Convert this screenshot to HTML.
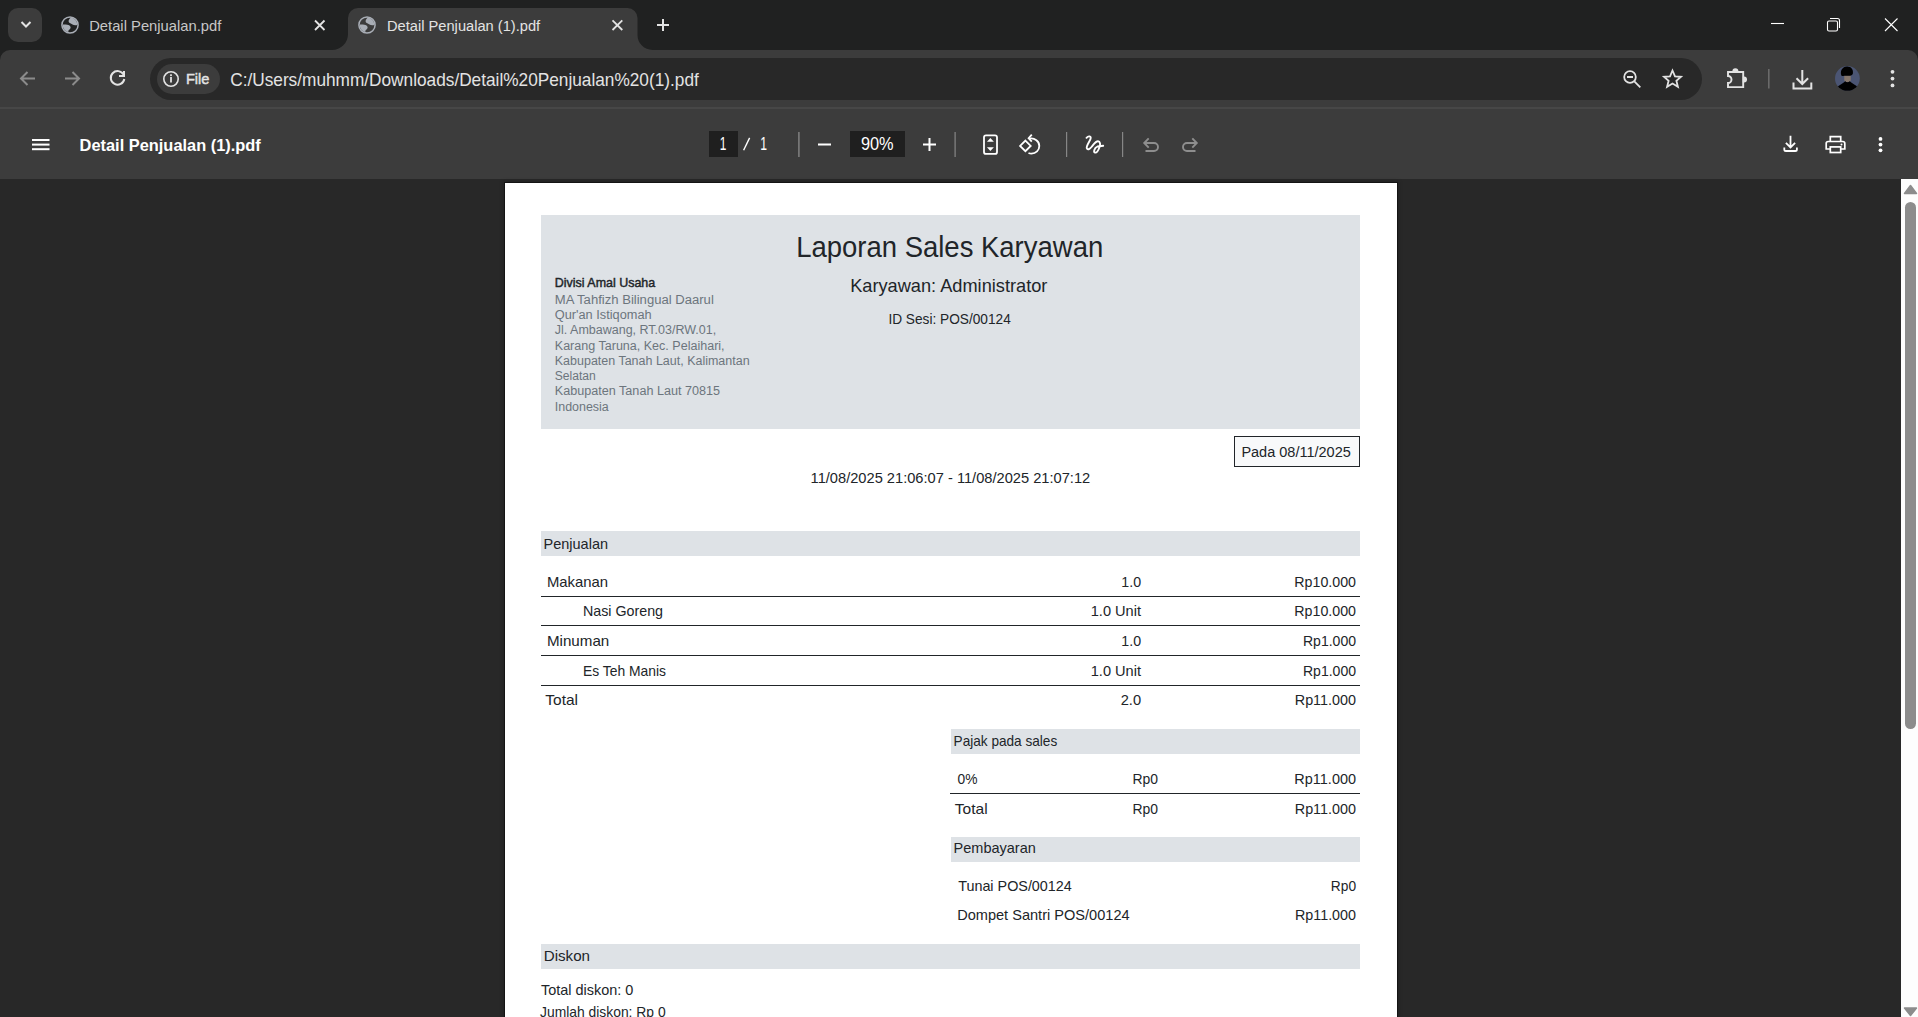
<!DOCTYPE html>
<html><head><meta charset="utf-8">
<style>
html,body{margin:0;padding:0;width:1918px;height:1017px;overflow:hidden;background:#282828;}
body{position:relative;font-family:"Liberation Sans",sans-serif;}
.a{position:absolute;}
svg text{font-family:"Liberation Sans",sans-serif;white-space:pre;}
</style></head><body>
<!-- tab strip -->
<div class="a" style="left:0;top:0;width:1918px;height:50px;background:#202121"></div>
<div class="a" style="left:8px;top:8px;width:34px;height:34px;border-radius:10px;background:#3c3c3c"></div>
<!-- toolbar -->
<div class="a" style="left:0;top:50px;width:1918px;height:58px;background:#3c3c3c"></div>
<div class="a" style="left:0;top:107px;width:1918px;height:2px;background:#474747"></div>
<!-- omnibox -->
<div class="a" style="left:150px;top:58px;width:1552px;height:42px;border-radius:21px;background:#282828"></div>
<div class="a" style="left:157px;top:64px;width:63px;height:30px;border-radius:15px;background:#3c3c3c"></div>
<!-- pdf toolbar -->
<div class="a" style="left:0;top:109px;width:1918px;height:70px;background:#3c3c3c"></div>
<div class="a" style="left:709px;top:131px;width:29px;height:26px;background:#1f1f1f"></div>
<div class="a" style="left:850px;top:131px;width:55px;height:26px;background:#1f1f1f"></div>
<!-- viewer -->
<div class="a" style="left:0;top:179px;width:1901px;height:838px;background:#282828"></div>
<div class="a" style="left:505px;top:183px;width:892px;height:840px;background:#fff;box-shadow:0 0 0 1px #141414,0 0 4px 2px rgba(0,0,0,0.18)"></div>
<div class="a" style="left:541px;top:215px;width:819px;height:214px;background:#dee2e6"></div>
<div class="a" style="left:1234px;top:436px;width:124px;height:29px;border:1px solid #212529;background:#f8f9fa"></div>
<div class="a" style="left:541px;top:531px;width:819px;height:25px;background:#dee2e6"></div>
<div class="a" style="left:541px;top:596px;width:819px;height:1px;background:#212529"></div>
<div class="a" style="left:541px;top:625px;width:819px;height:1px;background:#212529"></div>
<div class="a" style="left:541px;top:655px;width:819px;height:1px;background:#212529"></div>
<div class="a" style="left:541px;top:685px;width:819px;height:1px;background:#212529"></div>
<div class="a" style="left:951px;top:729px;width:409px;height:25px;background:#dee2e6"></div>
<div class="a" style="left:950px;top:793px;width:410px;height:1px;background:#212529"></div>
<div class="a" style="left:951px;top:837px;width:409px;height:25px;background:#dee2e6"></div>
<div class="a" style="left:541px;top:944px;width:819px;height:25px;background:#dee2e6"></div>
<!-- scrollbar -->
<div class="a" style="left:1901px;top:179px;width:17px;height:838px;background:#fdfdfd"></div>
<div class="a" style="left:1905px;top:202px;width:11px;height:527px;border-radius:6px;background:#8c8c8c"></div>

<svg class="a" style="left:0;top:0" width="1918" height="1017" viewBox="0 0 1918 1017">
<!-- active tab -->
<path d="M332,50 A16,16 0 0 0 348,34 L348,18 A10,10 0 0 1 358,8 L627.5,8 A10,10 0 0 1 637.5,18 L637.5,35 A15,15 0 0 0 652.5,50 Z" fill="#3c3c3c"/>
<!-- toolbar rounded corners -->
<path d="M0,50 L10,50 A10,10 0 0 0 0,60 Z" fill="#202121"/>
<path d="M1918,50 L1908,50 A10,10 0 0 1 1918,60 Z" fill="#202121"/>
<g stroke="#e3e3e3" stroke-width="2" fill="none" stroke-linecap="butt">
  <!-- tab search chevron -->
  <path d="M21.5,22 L26,26.5 L30.5,22" stroke-width="2"/>
  <!-- tab close x -->
  <path d="M315,20.5 L324.5,30 M324.5,20.5 L315,30" stroke="#e3e3e3" stroke-width="1.8"/>
  <path d="M612.5,20.3 L622.3,30 M622.3,20.3 L612.5,30" stroke="#e3e3e3" stroke-width="1.8"/>
  <!-- new tab plus -->
  <path d="M663,19 L663,31 M657,25 L669,25" stroke-width="2"/>
  <!-- window controls -->
  <path d="M1771,23.5 L1784,23.5" stroke="#ffffff" stroke-width="1.1"/>
  <rect x="1827.5" y="21" width="10" height="10" rx="1.5" stroke="#ffffff" stroke-width="1.1"/>
  <path d="M1830,18.5 L1837.5,18.5 A2,2 0 0 1 1839.5,20.5 L1839.5,28" stroke="#ffffff" stroke-width="1.1"/>
  <path d="M1885,18.5 L1897.5,31 M1897.5,18.5 L1885,31" stroke="#ffffff" stroke-width="1.1"/>
</g>
<!-- globes -->
<circle cx="70" cy="25" r="8.1" fill="none" stroke="#a9aeb6" stroke-width="1.5"/><path d="M70.8,17.6 C69.0,19.0 68.0,21.0 69.0,22.5 C70.0,23.5 71.5,23.5 72.5,24.5 C73.5,25.3 75.5,25.5 77.4,25.0 A7.4,7.4 0 0 0 70.8,17.6 Z M62.6,24.6 C65.0,24.5 68.0,24.5 69.5,25.5 C71.0,26.5 71.0,28.5 69.5,29.5 C68.5,30.2 68.0,31.0 68.5,32.2 A7.4,7.4 0 0 1 62.6,24.6 Z" fill="#a9aeb6"/>
<circle cx="367" cy="25" r="8.1" fill="none" stroke="#a9aeb6" stroke-width="1.5"/><path d="M367.8,17.6 C366.0,19.0 365.0,21.0 366.0,22.5 C367.0,23.5 368.5,23.5 369.5,24.5 C370.5,25.3 372.5,25.5 374.4,25.0 A7.4,7.4 0 0 0 367.8,17.6 Z M359.6,24.6 C362.0,24.5 365.0,24.5 366.5,25.5 C368.0,26.5 368.0,28.5 366.5,29.5 C365.5,30.2 365.0,31.0 365.5,32.2 A7.4,7.4 0 0 1 359.6,24.6 Z" fill="#a9aeb6"/>
<!-- nav buttons -->
<g fill="none" stroke-width="2">
  <path d="M35,78.5 L21.5,78.5 M27.5,72 L21,78.5 L27.5,85" stroke="#8b8b8b"/>
  <path d="M65,78.5 L78.5,78.5 M72.5,72 L79,78.5 L72.5,85" stroke="#8b8b8b"/>
  <path d="M123.5,74.5 A6.8,6.8 0 1 0 124.3,79" stroke="#e3e3e3"/>
  <path d="M124,71 L124,76 L119,76" stroke="#e3e3e3"/>
</g>
<!-- info icon -->
<circle cx="171" cy="79" r="7.2" fill="none" stroke="#e3e3e3" stroke-width="1.6"/>
<rect x="170.1" y="77" width="1.8" height="5.5" fill="#e3e3e3"/>
<rect x="170.1" y="74.3" width="1.8" height="1.8" fill="#e3e3e3"/>
<!-- omnibox right icons -->
<g fill="none" stroke="#e3e3e3" stroke-width="1.8">
  <circle cx="1630" cy="77" r="5.8"/>
  <path d="M1627,77 L1633,77" stroke-width="2"/>
  <path d="M1634.3,81.3 L1640.3,87.3"/>
  <path d="M1672.5,70.5 L1675,76.3 L1681,76.8 L1676.4,80.8 L1677.9,86.8 L1672.5,83.5 L1667.1,86.8 L1668.6,80.8 L1664,76.8 L1670,76.3 Z" stroke-linejoin="miter"/>
</g>
<!-- extensions -->
<path d="M1728,72 L1743.2,72 L1743.2,87.1 L1728,87.1 L1728,83 A3.5,3.5 0 0 0 1728,76 Z" fill="none" stroke="#e3e3e3" stroke-width="1.9"/>
<path d="M1732.4,72.5 L1732.4,71.3 A3,3 0 0 1 1738.4,71.3 L1738.4,72.5 Z" fill="#e3e3e3"/>
<path d="M1742.8,76.5 L1744,76.5 A3,3 0 0 1 1744,82.5 L1742.8,82.5 Z" fill="#e3e3e3"/>
<rect x="1768" y="69" width="1.6" height="19.5" fill="#6a6a6a"/>
<!-- download -->
<g fill="none" stroke="#e3e3e3" stroke-width="2">
  <path d="M1802.3,70 L1802.3,84 M1796.5,78.3 L1802.3,84 L1808.1,78.3"/>
  <path d="M1793.5,82.5 L1793.5,88.6 L1811.3,88.6 L1811.3,82.5"/>
</g>
<!-- avatar -->
<circle cx="1847.4" cy="78.4" r="12.4" fill="#4b5573"/>
<clipPath id="av"><circle cx="1847.4" cy="78.4" r="12.4"/></clipPath>
<g clip-path="url(#av)">
  <path d="M1844.3,80.5 C1845.5,82.5 1849.5,82.5 1850.7,80.5 L1850.8,75.5 L1844.2,75.5 Z" fill="#85766b"/>
  <path d="M1841.3,75.5 C1840,71 1842,67 1846.5,66.5 C1851,66 1853.8,69.5 1852.8,74 C1852,75.5 1850,76 1847,75.8 C1844.5,75.7 1842.5,76.5 1841.3,75.5Z" fill="#000"/>
  <path d="M1834,94 L1836.5,87.5 C1839.5,85 1843,83.5 1845.3,81.3 C1846.5,82.5 1848.5,82.5 1849.7,81.3 C1852,83.5 1855.5,85 1858.5,87.5 L1861,94 Z" fill="#000"/>
</g>
<!-- menu dots -->
<g fill="#e3e3e3"><circle cx="1892.5" cy="71.8" r="1.9"/><circle cx="1892.5" cy="78.6" r="1.9"/><circle cx="1892.5" cy="85.4" r="1.9"/></g>
<!-- PDF toolbar -->
<path d="M743.6,150.3 L749.6,137.9" stroke="#ffffff" stroke-width="1.4" fill="none"/>
<g fill="#ffffff">
  <rect x="32" y="139" width="17.5" height="2"/>
  <rect x="32" y="143.6" width="17.5" height="2"/>
  <rect x="32" y="148.2" width="17.5" height="2"/>
  <rect x="818" y="143.5" width="13" height="2"/>
  <rect x="923" y="143.5" width="13" height="2"/>
  <rect x="928.5" y="138" width="2" height="13"/>
</g>
<g fill="#868686">
  <rect x="798.2" y="132" width="1.4" height="25"/>
  <rect x="954.5" y="132" width="1.2" height="25"/>
  <rect x="1066" y="132" width="1.2" height="25"/>
  <rect x="1122" y="132" width="1.2" height="25"/>
</g>
<g fill="none" stroke="#ffffff" stroke-width="2">
  <rect x="984" y="135.3" width="13" height="18.6" rx="2" stroke-width="1.8"/>
  <path d="M1025.4,140.6 L1030.7,145.9 L1025.4,151.2 L1020.1,145.9 Z" stroke-width="1.8"/>
  <path d="M1029.6,138.6 C1034.8,137.8 1039.3,141.3 1039.3,146 C1039.3,150.3 1035.8,153.6 1031.5,153.6 C1030.4,153.6 1029.4,153.4 1028.5,153" stroke-width="1.8"/>
  <path d="M1031.8,134.6 L1028.6,138.2 L1031.8,141.6" stroke-width="1.8"/>
  <path d="M1086.5,137.8 C1088.5,135.5 1091.5,136 1090.5,139 C1089.5,142 1086,146 1086.8,148.3 C1087.5,150.3 1089.5,149.3 1091.5,147 C1093.5,144.7 1095.5,141.3 1098,141.3 C1100.2,141.3 1100.6,144.5 1099.6,147 C1098.5,150 1096.5,153 1095,152.6 C1093.4,152.1 1094,148 1097.5,146.5 L1103.2,145.8" stroke-width="1.9" stroke-linecap="round"/>
</g>
<g fill="#ffffff">
  <path d="M986.9,141.7 L990.4,137.9 L993.9,141.7 Z"/>
  <path d="M986.9,147.2 L990.4,151 L993.9,147.2 Z"/>
</g>
<g fill="none" stroke="#8e8e8e" stroke-width="1.9">
  <path d="M1145,143 L1154,143 A4,4 0 0 1 1154,151 L1145.5,151"/>
  <path d="M1148.7,138.3 L1144.2,143 L1148.7,147.7"/>
  <path d="M1196,143 L1187,143 A4,4 0 0 0 1187,151 L1195.5,151"/>
  <path d="M1192.3,138.3 L1196.8,143 L1192.3,147.7"/>
</g>
<g fill="none" stroke="#ffffff" stroke-width="2">
  <path d="M1790.5,135.8 L1790.5,147.5 M1785.9,142.9 L1790.5,147.5 L1795.1,142.9" stroke-width="1.8"/>
  <path d="M1784.3,147.6 L1784.3,149.4 A1.6,1.6 0 0 0 1785.9,151 L1795.3,151 A1.6,1.6 0 0 0 1796.9,149.4 L1796.9,147.6" stroke-width="1.8"/>
  <path d="M1830.3,141 L1830.3,136.6 L1840.7,136.6 L1840.7,141" stroke-width="1.7"/>
  <path d="M1830.3,149 L1826.2,149 L1826.2,143.5 A2,2 0 0 1 1828.2,141.5 L1842.8,141.5 A2,2 0 0 1 1844.8,143.5 L1844.8,149 L1840.7,149" stroke-width="1.7"/>
  <rect x="1830.3" y="146.9" width="10.4" height="5.6" stroke-width="1.7"/>
</g>
<circle cx="1841.5" cy="144.4" r="1" fill="#ffffff"/>
<g fill="#ffffff"><circle cx="1880.5" cy="138.9" r="1.9"/><circle cx="1880.5" cy="144.6" r="1.9"/><circle cx="1880.5" cy="150.3" r="1.9"/></g>
<!-- scrollbar arrows -->
<path d="M1910.5,185.5 L1916.5,193.5 L1904.5,193.5 Z" fill="#8c8c8c" stroke="#8c8c8c" stroke-width="1.5" stroke-linejoin="round"/>
<path d="M1910.5,1015.5 L1916.5,1008 L1904.5,1008 Z" fill="#8c8c8c" stroke="#8c8c8c" stroke-width="1.5" stroke-linejoin="round"/>

<text x="89.18" y="30.7" font-size="15.41" textLength="132.22" lengthAdjust="spacingAndGlyphs" fill="#c7c7c7" font-weight="normal">Detail Penjualan.pdf</text>
<text x="386.99" y="30.5" font-size="15.26" textLength="153.21" lengthAdjust="spacingAndGlyphs" fill="#e3e3e3" font-weight="normal">Detail Penjualan (1).pdf</text>
<text x="185.95" y="83.9" font-size="15.41" textLength="23.50" lengthAdjust="spacingAndGlyphs" fill="#e3e3e3" stroke="#e3e3e3" stroke-width="0.45">File</text>
<text x="230.20" y="85.8" font-size="18.60" textLength="468.61" lengthAdjust="spacingAndGlyphs" fill="#e3e3e3" font-weight="normal">C:/Users/muhmm/Downloads/Detail%20Penjualan%20(1).pdf</text>
<text x="79.59" y="150.8" font-size="16.86" textLength="181.21" lengthAdjust="spacingAndGlyphs" fill="#ffffff" font-weight="bold">Detail Penjualan (1).pdf</text>
<text x="719.84" y="150.1" font-size="17.44" textLength="6.65" lengthAdjust="spacingAndGlyphs" fill="#ffffff" font-weight="normal">1</text>
<text x="760.29" y="150.1" font-size="17.44" textLength="6.78" lengthAdjust="spacingAndGlyphs" fill="#ffffff" font-weight="normal">1</text>
<text x="860.97" y="150.1" font-size="17.44" textLength="32.64" lengthAdjust="spacingAndGlyphs" fill="#ffffff" font-weight="normal">90%</text>
<text x="796.16" y="257.2" font-size="30.23" textLength="307.06" lengthAdjust="spacingAndGlyphs" fill="#212529" font-weight="normal">Laporan Sales Karyawan</text>
<text x="850.19" y="291.9" font-size="18.60" textLength="197.22" lengthAdjust="spacingAndGlyphs" fill="#212529" font-weight="normal">Karyawan: Administrator</text>
<text x="888.39" y="323.7" font-size="15.26" textLength="122.42" lengthAdjust="spacingAndGlyphs" fill="#212529" font-weight="normal">ID Sesi: POS/00124</text>
<text x="554.79" y="287.0" font-size="12.94" textLength="100.41" lengthAdjust="spacingAndGlyphs" fill="#212529" stroke="#212529" stroke-width="0.45">Divisi Amal Usaha</text>
<text x="554.78" y="303.9" font-size="13.23" textLength="159.03" lengthAdjust="spacingAndGlyphs" fill="#6c757d" font-weight="normal">MA Tahfizh Bilingual Daarul</text>
<text x="554.79" y="318.7" font-size="13.23" textLength="96.82" lengthAdjust="spacingAndGlyphs" fill="#6c757d" font-weight="normal">Qur'an Istiqomah</text>
<text x="554.79" y="334.4" font-size="13.23" textLength="161.42" lengthAdjust="spacingAndGlyphs" fill="#6c757d" font-weight="normal">Jl. Ambawang, RT.03/RW.01,</text>
<text x="554.79" y="349.6" font-size="13.23" textLength="169.82" lengthAdjust="spacingAndGlyphs" fill="#6c757d" font-weight="normal">Karang Taruna, Kec. Pelaihari,</text>
<text x="554.79" y="364.8" font-size="13.23" textLength="194.81" lengthAdjust="spacingAndGlyphs" fill="#6c757d" font-weight="normal">Kabupaten Tanah Laut, Kalimantan</text>
<text x="554.77" y="379.8" font-size="13.23" textLength="41.08" lengthAdjust="spacingAndGlyphs" fill="#6c757d" font-weight="normal">Selatan</text>
<text x="554.79" y="395.3" font-size="13.23" textLength="165.23" lengthAdjust="spacingAndGlyphs" fill="#6c757d" font-weight="normal">Kabupaten Tanah Laut 70815</text>
<text x="554.77" y="410.5" font-size="13.23" textLength="54.04" lengthAdjust="spacingAndGlyphs" fill="#6c757d" font-weight="normal">Indonesia</text>
<text x="1241.39" y="456.7" font-size="14.83" textLength="109.42" lengthAdjust="spacingAndGlyphs" fill="#212529" font-weight="normal">Pada 08/11/2025</text>
<text x="810.59" y="482.7" font-size="14.10" textLength="279.62" lengthAdjust="spacingAndGlyphs" fill="#212529" font-weight="normal">11/08/2025 21:06:07 - 11/08/2025 21:07:12</text>
<text x="543.54" y="548.9" font-size="14.54" textLength="64.49" lengthAdjust="spacingAndGlyphs" fill="#212529" font-weight="normal">Penjualan</text>
<text x="546.92" y="586.8" font-size="14.54" textLength="61.13" lengthAdjust="spacingAndGlyphs" fill="#212529" font-weight="normal">Makanan</text>
<text x="1121.34" y="586.8" font-size="14.54" textLength="19.72" lengthAdjust="spacingAndGlyphs" fill="#212529" font-weight="normal">1.0</text>
<text x="1294.34" y="586.8" font-size="14.54" textLength="61.68" lengthAdjust="spacingAndGlyphs" fill="#212529" font-weight="normal">Rp10.000</text>
<text x="582.94" y="615.8" font-size="14.54" textLength="80.09" lengthAdjust="spacingAndGlyphs" fill="#212529" font-weight="normal">Nasi Goreng</text>
<text x="1090.76" y="615.8" font-size="14.54" textLength="50.27" lengthAdjust="spacingAndGlyphs" fill="#212529" font-weight="normal">1.0 Unit</text>
<text x="1294.34" y="615.8" font-size="14.54" textLength="61.68" lengthAdjust="spacingAndGlyphs" fill="#212529" font-weight="normal">Rp10.000</text>
<text x="546.92" y="645.5" font-size="14.54" textLength="62.33" lengthAdjust="spacingAndGlyphs" fill="#212529" font-weight="normal">Minuman</text>
<text x="1121.34" y="645.5" font-size="14.54" textLength="19.72" lengthAdjust="spacingAndGlyphs" fill="#212529" font-weight="normal">1.0</text>
<text x="1302.97" y="645.5" font-size="14.54" textLength="53.06" lengthAdjust="spacingAndGlyphs" fill="#212529" font-weight="normal">Rp1.000</text>
<text x="582.96" y="675.6" font-size="14.54" textLength="83.05" lengthAdjust="spacingAndGlyphs" fill="#212529" font-weight="normal">Es Teh Manis</text>
<text x="1090.76" y="675.6" font-size="14.54" textLength="50.27" lengthAdjust="spacingAndGlyphs" fill="#212529" font-weight="normal">1.0 Unit</text>
<text x="1302.97" y="675.6" font-size="14.54" textLength="53.06" lengthAdjust="spacingAndGlyphs" fill="#212529" font-weight="normal">Rp1.000</text>
<text x="545.35" y="704.6" font-size="14.54" textLength="32.68" lengthAdjust="spacingAndGlyphs" fill="#212529" font-weight="normal">Total</text>
<text x="1120.74" y="704.6" font-size="14.54" textLength="20.35" lengthAdjust="spacingAndGlyphs" fill="#212529" font-weight="normal">2.0</text>
<text x="1294.75" y="704.6" font-size="14.54" textLength="61.28" lengthAdjust="spacingAndGlyphs" fill="#212529" font-weight="normal">Rp11.000</text>
<text x="953.57" y="746.0" font-size="14.54" textLength="103.65" lengthAdjust="spacingAndGlyphs" fill="#212529" font-weight="normal">Pajak pada sales</text>
<text x="957.54" y="783.8" font-size="14.54" textLength="19.93" lengthAdjust="spacingAndGlyphs" fill="#212529" font-weight="normal">0%</text>
<text x="1132.52" y="783.8" font-size="14.54" textLength="25.54" lengthAdjust="spacingAndGlyphs" fill="#212529" font-weight="normal">Rp0</text>
<text x="1294.36" y="783.8" font-size="14.54" textLength="61.67" lengthAdjust="spacingAndGlyphs" fill="#212529" font-weight="normal">Rp11.000</text>
<text x="954.80" y="813.6" font-size="14.54" textLength="32.84" lengthAdjust="spacingAndGlyphs" fill="#212529" font-weight="normal">Total</text>
<text x="1132.52" y="813.6" font-size="14.54" textLength="25.54" lengthAdjust="spacingAndGlyphs" fill="#212529" font-weight="normal">Rp0</text>
<text x="1294.75" y="813.6" font-size="14.54" textLength="61.28" lengthAdjust="spacingAndGlyphs" fill="#212529" font-weight="normal">Rp11.000</text>
<text x="953.55" y="853.0" font-size="14.54" textLength="82.28" lengthAdjust="spacingAndGlyphs" fill="#212529" font-weight="normal">Pembayaran</text>
<text x="958.18" y="891.3" font-size="14.54" textLength="113.63" lengthAdjust="spacingAndGlyphs" fill="#212529" font-weight="normal">Tunai POS/00124</text>
<text x="1330.85" y="891.3" font-size="14.54" textLength="25.18" lengthAdjust="spacingAndGlyphs" fill="#212529" font-weight="normal">Rp0</text>
<text x="957.17" y="920.4" font-size="14.54" textLength="172.44" lengthAdjust="spacingAndGlyphs" fill="#212529" font-weight="normal">Dompet Santri POS/00124</text>
<text x="1294.97" y="920.4" font-size="14.54" textLength="61.05" lengthAdjust="spacingAndGlyphs" fill="#212529" font-weight="normal">Rp11.000</text>
<text x="543.72" y="961.0" font-size="14.54" textLength="46.33" lengthAdjust="spacingAndGlyphs" fill="#212529" font-weight="normal">Diskon</text>
<text x="541.00" y="995.2" font-size="14.54" textLength="92.41" lengthAdjust="spacingAndGlyphs" fill="#212529" font-weight="normal">Total diskon: 0</text>
<text x="539.99" y="1017.3" font-size="14.54" textLength="125.62" lengthAdjust="spacingAndGlyphs" fill="#212529" font-weight="normal">Jumlah diskon: Rp 0</text>
</svg>
</body></html>
